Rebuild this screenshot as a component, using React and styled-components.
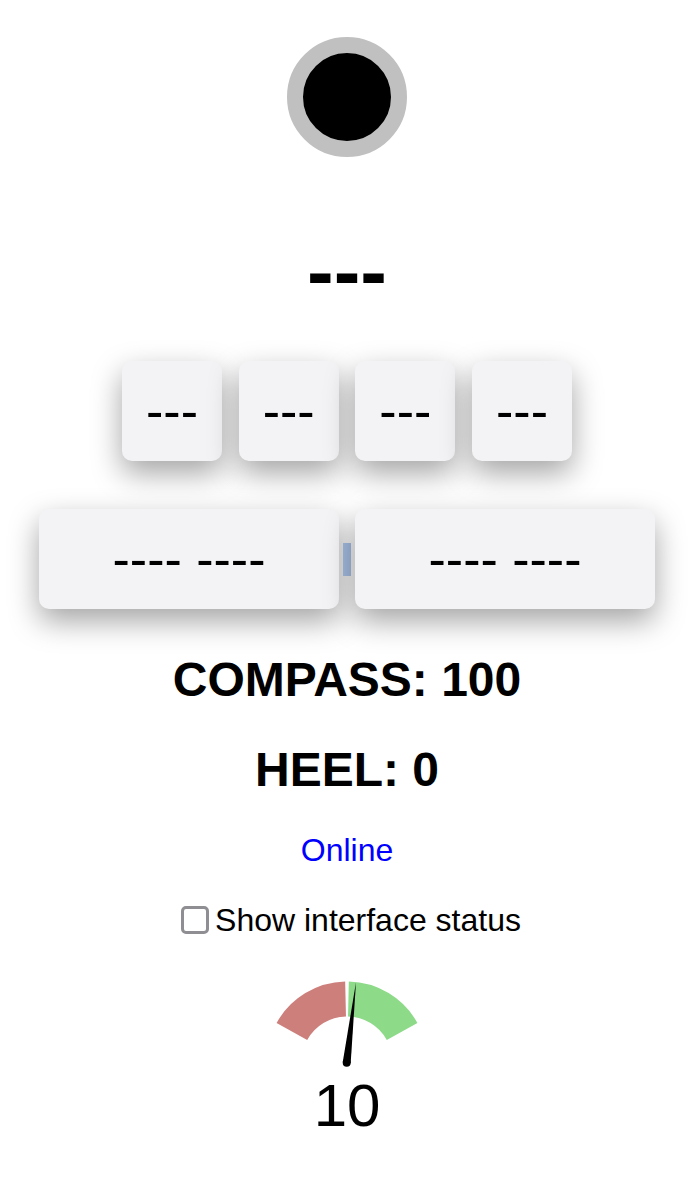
import React from 'react';
import styled, { createGlobalStyle } from 'styled-components';

const Global = createGlobalStyle`
  html, body { margin: 0; padding: 0; background: #fff; }
  body { font-family: "Liberation Sans", Helvetica, Arial, sans-serif; color: #000; }
`;

const Page = styled.div`
  width: 694px;
  display: flex;
  flex-direction: column;
  align-items: center;
  padding-top: 37px;
  padding-bottom: 40px;
`;

const Indicator = styled.div`
  width: 120px;
  height: 120px;
  box-sizing: border-box;
  border-radius: 50%;
  border: 16px solid #c0c0c0;
  background: #000;
`;

const Title = styled.h1`
  margin: 75px 0 0;
  font-size: 80px;
  font-weight: 700;
  line-height: 80px;
`;

const Row = styled.div`
  display: flex;
  align-items: center;
  gap: ${(p) => p.$gap}px;
  margin-top: ${(p) => p.$top}px;
`;

const Key = styled.div`
  width: ${(p) => p.$w}px;
  height: 100px;
  border-radius: 10px;
  background: #f3f3f5;
  box-shadow: 0 12px 30px rgba(0, 0, 0, 0.36);
  display: flex;
  align-items: center;
  justify-content: center;
  font-size: 52px;
  white-space: pre;
`;

const Handle = styled.div`
  width: 8px;
  height: 33px;
  background: #a0b8dc;
`;

const Reading = styled.h2`
  margin: ${(p) => p.$top}px 0 0;
  font-size: 48px;
  font-weight: 700;
  line-height: 48px;
`;

const Status = styled.div`
  margin-top: 40px;
  font-size: 32px;
  line-height: 32px;
  color: #0000ff;
`;

const CheckRow = styled.label`
  margin-top: 38px;
  height: 32px;
  display: flex;
  align-items: center;
  font-size: 32px;
  line-height: 32px;
`;

const Box = styled.span`
  width: 28px;
  height: 28px;
  box-sizing: border-box;
  border: 3px solid #8e8e93;
  border-radius: 5px;
  margin: 0 6px 0 8px;
  background: #fff;
`;

const GaugeSvg = styled.svg`
  margin-top: 39px;
  display: block;
`;

const GaugeValue = styled.div`
  margin-top: 6px;
  font-size: 60px;
  line-height: 60px;
`;

function Gauge() {
  return (
    <GaugeSvg width="160" height="95" viewBox="0 0 160 95">
      <path
        d="M 9.59 47.97 A 80.5 80.5 0 0 1 78.17 6.52 L 78.97 41.51 A 45.5 45.5 0 0 0 40.21 64.94 Z"
        fill="#cd7f7c"
      />
      <path
        d="M 81.83 6.52 A 80.5 80.5 0 0 1 150.41 47.97 L 119.79 64.94 A 45.5 45.5 0 0 0 81.03 41.51 Z"
        fill="#8dda89"
      />
      <path d="M 75.72 87.24 L 89 7.3 L 83.68 88.16 Z" fill="#000" />
      <circle cx="79.7" cy="87.7" r="4" fill="#000" />
    </GaugeSvg>
  );
}

export default function App() {
  return (
    <>
      <Global />
      <Page>
        <Indicator />
        <Title>---</Title>
        <Row $gap={16.67} $top={49}>
          <Key $w={100}>---</Key>
          <Key $w={100}>---</Key>
          <Key $w={100}>---</Key>
          <Key $w={100}>---</Key>
        </Row>
        <Row $gap={4} $top={48}>
          <Key $w={300}>---- ----</Key>
          <Handle />
          <Key $w={300}>---- ----</Key>
        </Row>
        <Reading $top={47}>COMPASS: 100</Reading>
        <Reading $top={42}>HEEL: 0</Reading>
        <Status>Online</Status>
        <CheckRow>
          <Box />
          Show interface status
        </CheckRow>
        <Gauge />
        <GaugeValue>10</GaugeValue>
      </Page>
    </>
  );
}
